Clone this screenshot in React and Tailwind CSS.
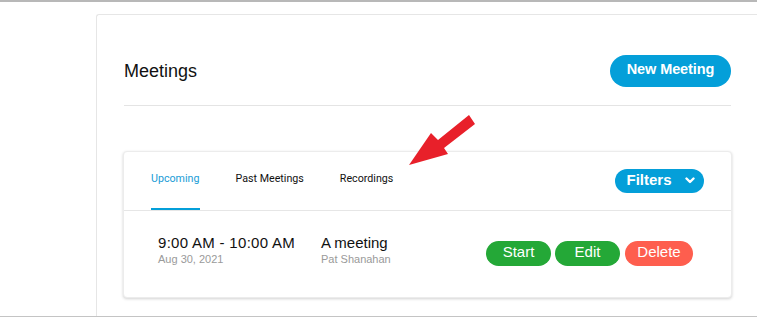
import React from "react";

export default function App() {
  return (
    <div
      className="relative w-[757px] h-[318px] bg-white overflow-hidden flex flex-col border-t-2 border-[#b8b8b8]"
      style={{ fontFamily: '"Liberation Sans", Arial, sans-serif' }}
    >
      <div className="flex flex-1">
        <div className="w-[96px] shrink-0" />
        <div className="flex-1 mt-[12px] border-l border-t border-[#e6e6e6] rounded-tl-[3px] pl-[27px] pr-[26px] flex flex-col">
          <div className="mt-[40px] h-[32px] flex items-center justify-between">
            <div className="text-[18px] text-[#111] leading-none">Meetings</div>
            <button className="h-[32px] w-[121px] rounded-full bg-[#049fd9] text-white text-[14.5px] font-bold leading-none pb-[3px] tracking-[-0.1px]">
              New Meeting
            </button>
          </div>
          <div className="mt-[18px] h-px bg-[#e4e4e4]" />
          <div className="mt-[45px] -mx-px rounded-[4px] border border-[#ececec] shadow-[0_1px_3px_rgba(0,0,0,0.18)] bg-white">
            <div className="h-[59px] flex items-end justify-between border-b border-[#e6e6e6] pl-[27px] pr-[27px]">
              <div className="flex gap-[36px] text-[10.7px] leading-none" style={{ fontFamily: 'Roboto, "Liberation Sans", sans-serif' }}>
                <div className="flex flex-col items-center">
                  <span className="text-[#1a9cd6] pb-[23px]">Upcoming</span>
                  <span className="h-[2px] w-full bg-[#049fd9]" />
                </div>
                <div className="pb-[25px] text-[#111]">Past Meetings</div>
                <div className="pb-[25px] text-[#111]">Recordings</div>
              </div>
              <button className="mb-[17px] h-[24px] w-[89px] rounded-full bg-[#049fd9] text-white text-[15px] font-bold leading-none flex items-center justify-center gap-[13px] pl-[2px] pb-[3px]">
                <span>Filters</span>
                <svg width="10" height="7" viewBox="0 0 10 7" className="mt-[2px]">
                  <path d="M1.5 1.5 L5 5 L8.5 1.5" stroke="white" strokeWidth="2.4" fill="none" strokeLinecap="round" strokeLinejoin="round" />
                </svg>
              </button>
            </div>
            <div className="h-[86px] flex items-center pl-[34px] pr-[38px]">
              <div className="w-[163px] flex flex-col mt-[-8px]">
                <span className="text-[15px] text-[#111] leading-[18px] tracking-[0.3px]">9:00 AM - 10:00 AM</span>
                <span className="text-[11px] text-[#9a9a9a] leading-[14px]">Aug 30, 2021</span>
              </div>
              <div className="flex flex-col mt-[-8px]">
                <span className="text-[15px] text-[#111] leading-[18px]">A meeting</span>
                <span className="text-[11px] text-[#9a9a9a] leading-[14px]">Pat Shanahan</span>
              </div>
              <div className="ml-auto flex gap-[4px] mt-[-2px]">
                <button className="h-[25px] w-[65px] rounded-full bg-[#24a837] text-white text-[15px] leading-none pb-[3px]">Start</button>
                <button className="h-[25px] w-[65px] rounded-full bg-[#24a837] text-white text-[15px] leading-none pb-[3px]">Edit</button>
                <button className="ml-[1px] h-[25px] w-[68px] rounded-full bg-[#fe5e4e] text-white text-[15px] leading-none pb-[3px]">Delete</button>
              </div>
            </div>
          </div>
        </div>
      </div>
      <div className="h-px bg-[#c4c4c4] mb-[1px]" />
      <svg className="absolute left-0 top-0 pointer-events-none" width="757" height="318">
        <polygon
          points="409,163 431,131 438,138 469,113 475,122 444,146 448,152"
          fill="#e8202a"
        />
      </svg>
    </div>
  );
}
